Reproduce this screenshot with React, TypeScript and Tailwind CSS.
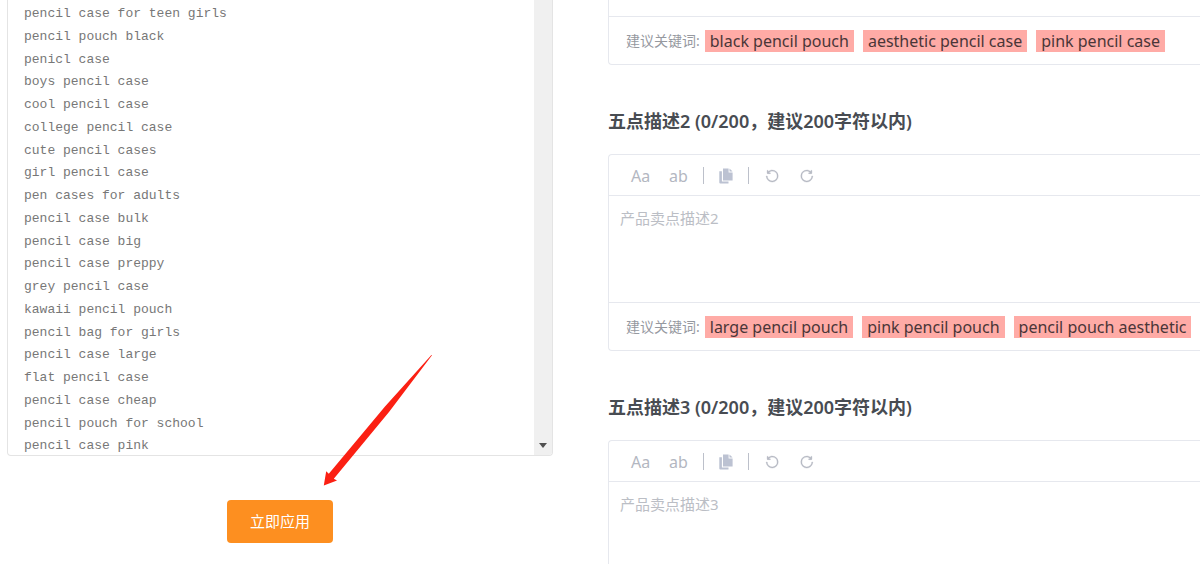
import React from "react";

const searchTerms = [
  "pencil case for teen girls",
  "pencil pouch black",
  "penicl case",
  "boys pencil case",
  "cool pencil case",
  "college pencil case",
  "cute pencil cases",
  "girl pencil case",
  "pen cases for adults",
  "pencil case bulk",
  "pencil case big",
  "pencil case preppy",
  "grey pencil case",
  "kawaii pencil pouch",
  "pencil bag for girls",
  "pencil case large",
  "flat pencil case",
  "pencil case cheap",
  "pencil pouch for school",
  "pencil case pink",
];

const rotateLeft =
  "M289.088 296.704h92.992a32 32 0 0 1 0 64H232.96a32 32 0 0 1-32-32V179.712a32 32 0 0 1 64 0v50.56a384 384 0 0 1 643.84 282.88 384 384 0 0 1-383.936 384 384 384 0 0 1-384-384h64a320 320 0 1 0 640 0 320 320 0 0 0-555.712-216.448z";

function UndoIcon() {
  return (
    <svg viewBox="0 0 1024 1024" className="size-4 fill-current stroke-current" strokeWidth="24" aria-hidden="true">
      <path d={rotateLeft} />
    </svg>
  );
}

function RedoIcon() {
  return (
    <svg viewBox="0 0 1024 1024" className="size-4 fill-current stroke-current" strokeWidth="24" aria-hidden="true">
      <path d={rotateLeft} transform="translate(1024 0) scale(-1 1)" />
    </svg>
  );
}

function CopyIcon() {
  return (
    <svg viewBox="0 0 14 16" className="h-4 w-3.5 fill-current" aria-hidden="true">
      <path d="M4 0.5h5.6v3.9h4V12.5H4z" />
      <path d="M10.5 0.5l3.1 3.1h-3.1z" />
      <path d="M0.3 3.2h2.6v10.4h6.6v2H1.3a1 1 0 0 1-1-1z" />
    </svg>
  );
}

function Divider() {
  return <span className="h-[17px] w-px bg-[#bcc0ca]" />;
}

function Toolbar() {
  return (
    <div className="flex h-[41px] items-center border-b border-[#e6e8ee] pt-px pl-[22px] text-base text-[#b3b7c1]">
      <button type="button" aria-label="首字母大写" className="w-[38px] text-left">Aa</button>
      <button type="button" aria-label="全部小写" className="w-[34px] text-left">ab</button>
      <Divider />
      <button type="button" aria-label="复制" className="mx-[15px] text-[#bcc2d2]"><CopyIcon /></button>
      <Divider />
      <button type="button" aria-label="撤销" className="ml-[15px]"><UndoIcon /></button>
      <button type="button" aria-label="重做" className="ml-[19px]"><RedoIcon /></button>
    </div>
  );
}

function Keywords({ words }: { words: string[] }) {
  return (
    <div className="flex h-12 items-center border-t border-[#e6e8ee] pl-[17px]">
      <span className="mr-[5px] shrink-0 text-sm text-[#96999f]">建议关键词:</span>
      <div className="flex gap-[9px]">
        {words.map((w) => (
          <span key={w} className="shrink-0 bg-[#ffaba6] px-[5px] text-base leading-[22px] whitespace-nowrap text-[#4a3638]">
            {w}
          </span>
        ))}
      </div>
    </div>
  );
}

function Description({ index, words }: { index: number; words?: string[] }) {
  const id = `description-${index}`;
  return (
    <section>
      <label htmlFor={id} className="mt-11 mb-[21px] block text-lg leading-6 font-semibold text-[#484c52]">
        五点描述{index} (0/200，建议200字符以内)
      </label>
      <div className="rounded-l border border-r-0 border-[#e6e8ee]">
        <Toolbar />
        <textarea
          id={id}
          placeholder={`产品卖点描述${index}`}
          className="block h-[106px] w-full resize-none px-[11px] py-2.5 text-[15px] leading-6 outline-none placeholder:text-[#bbbec5]"
        />
        {words && <Keywords words={words} />}
      </div>
    </section>
  );
}

export default function App() {
  return (
    <main className="relative grid h-screen grid-cols-[546fr_592fr] gap-[55px] overflow-hidden bg-white pl-[7px] font-['Noto_Sans','Noto_Sans_CJK_SC',sans-serif]">
      <div className="flex flex-col items-center">
        <div className="flex h-114 w-full overflow-hidden rounded-b border border-t-0 border-[#e4e4e4]">
          <textarea
            aria-label="关键词"
            defaultValue={searchTerms.join("\n")}
            className="block min-w-0 flex-1 resize-none overflow-hidden pt-[3px] pl-4 font-['Liberation_Mono','Noto_Sans_CJK_SC',monospace] text-[13px] leading-[1.75] text-[#777777] outline-none"
          />
          <div className="flex w-[18px] items-end justify-center bg-[#f0f0f0] pb-[7px]">
            <svg viewBox="0 0 8 5" className="h-[5px] w-2 fill-[#505050]" aria-hidden="true">
              <path d="M0 0h8L4 5z" />
            </svg>
          </div>
        </div>
        <button type="button" className="mt-11 rounded bg-[#fd8f20] px-[23px] py-[11px] text-[15px] leading-[21px] text-white">
          立即应用
        </button>
      </div>

      <div className="min-w-0">
        <div className="rounded-bl border-b border-l border-[#e6e8ee] pt-4">
          <Keywords words={["black pencil pouch", "aesthetic pencil case", "pink pencil case"]} />
        </div>
        <Description index={2} words={["large pencil pouch", "pink pencil pouch", "pencil pouch aesthetic"]} />
        <Description index={3} />
      </div>

      <svg viewBox="0 0 110 132" className="pointer-events-none absolute top-[355px] left-[323px] h-[132px] w-[110px] fill-[#fb2013]" aria-hidden="true">
        <path d="M109 0.3L108.4 0L62 51.5L5.8 118.8L3.2 116.2L0.8 130.5L14 125.4L10.8 123.8L66 57Z" />
      </svg>
    </main>
  );
}
